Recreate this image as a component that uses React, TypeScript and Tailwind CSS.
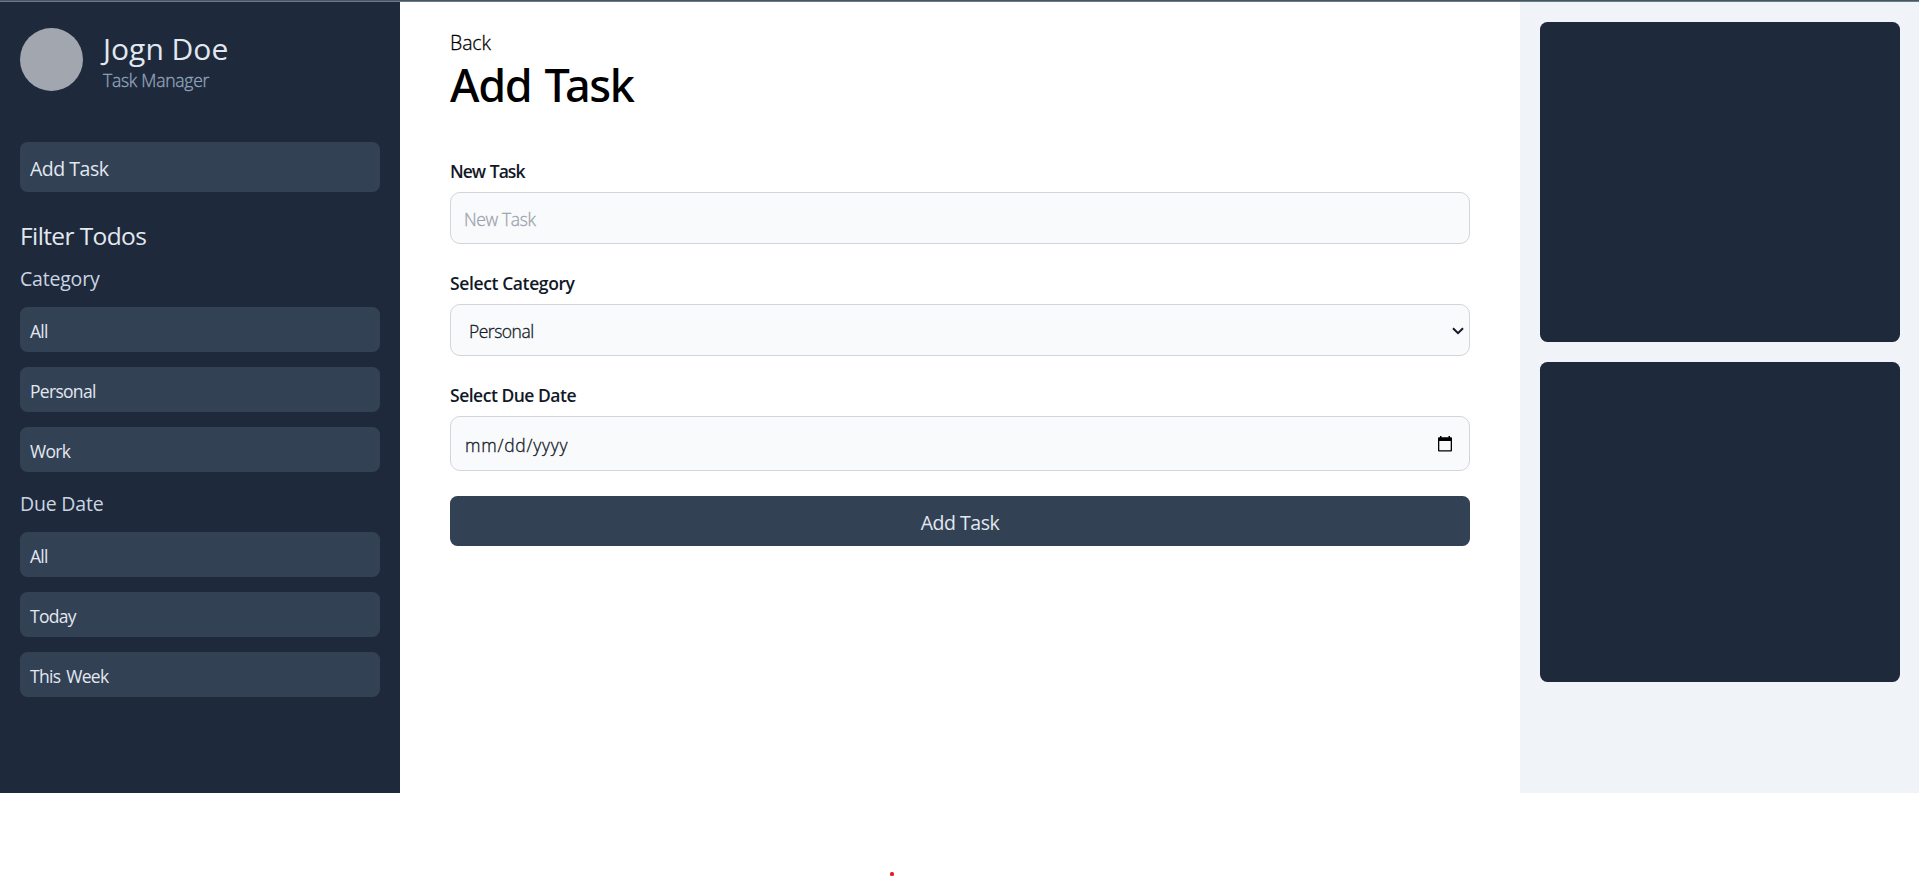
const categories = ["All", "Personal", "Work"];
const dueDates = ["All", "Today", "This Week"];

function FilterGroup({ title, items, className }: { title: string; items: string[]; className: string }) {
  return (
    <section className={className}>
      <h3 className="text-[19.5px] leading-[35px] tracking-[-0.2px] text-slate-300">{title}</h3>
      <ul className="mt-[11px] flex flex-col gap-[15px]">
        {items.map((item) => (
          <li
            key={item}
            className="flex h-[45px] items-center rounded-[7.5px] bg-[#334155] px-[10px] pt-[3px] text-[17.5px] tracking-[-0.04em] [word-spacing:2px] text-slate-200"
          >
            {item}
          </li>
        ))}
      </ul>
    </section>
  );
}

function Sidebar() {
  return (
    <aside className="flex w-[400px] shrink-0 flex-col bg-[#1e293b] px-5 pt-[26px]">
      <div className="flex h-[63px] items-center gap-5">
        <div className="size-[63px] rounded-full bg-[#a2a6af]" />
        <div className="pt-[3px]">
          <h1 className="text-[30px] leading-[38px] text-slate-200">Jogn Doe</h1>
          <p className="text-[17.5px] leading-[25px] font-light tracking-[-0.25px] text-slate-400 [-webkit-text-stroke:0.35px]">
            Task Manager
          </p>
        </div>
      </div>
      <button className="mt-[51px] flex h-[50px] items-center rounded-[7.5px] bg-[#334155] px-[10px] pt-[3px] text-[19.5px] tracking-[-0.025em] text-slate-200">
        Add Task
      </button>
      <h2 className="mt-[25px] text-[24.5px] leading-[38px] tracking-[-0.6px] text-slate-200">Filter Todos</h2>
      <FilterGroup title="Category" items={categories} className="mt-[6px]" />
      <FilterGroup title="Due Date" items={dueDates} className="mt-[14px]" />
    </aside>
  );
}

function TaskForm() {
  return (
    <main className="flex flex-1 flex-col px-[50px] pt-[26px] text-[#111827]">
      <a className="text-[19.5px] leading-[30px] font-light tracking-[-0.1px] text-black [-webkit-text-stroke:0.3px]">
        Back
      </a>
      <h2 className="mt-[2px] font-['Noto_Sans','Open_Sans',sans-serif] text-[45px] leading-[50px] font-medium tracking-[-0.03em] [word-spacing:3px] text-black">
        Add Task
      </h2>
      <label className="mt-[49px] text-[17.5px] leading-[25px] font-semibold tracking-[-0.055em] [word-spacing:1px]">
        New Task
      </label>
      <div className="mt-[8px] flex h-[52px] items-center rounded-[10px] border border-[#d1d5db] bg-[#f9fafb] px-[13px] pt-[3px] text-[17.5px] font-light tracking-[-0.35px] text-[#9ca3af] [-webkit-text-stroke:0.3px]">
        New Task
      </div>
      <label className="mt-[27px] text-[17.5px] leading-[25px] font-semibold tracking-[-0.022em]">
        Select Category
      </label>
      <div className="mt-[8px] flex h-[52px] items-center justify-between rounded-[10px] border border-[#d1d5db] bg-[#f9fafb] pr-[5px] pl-[18px] text-[17.5px] font-light">
        <span className="pt-[3px] tracking-[-0.5px] [-webkit-text-stroke:0.3px]">Personal</span>
        <svg className="mt-px h-[8px] w-[12px]" viewBox="0 0 12 8" fill="none" stroke="#111827" strokeWidth="2">
          <path d="M1 1.2L6 6.2L11 1.2" />
        </svg>
      </div>
      <label className="mt-[27px] text-[17.5px] leading-[25px] font-semibold tracking-[-0.028em]">
        Select Due Date
      </label>
      <div className="mt-[8px] flex h-[55px] items-center justify-between rounded-[10px] border border-[#d1d5db] bg-[#f9fafb] pr-[17px] pl-[14px] text-[17.5px] font-light">
        <span className="pt-[3px] tracking-[0.75px] [-webkit-text-stroke:0.3px]">mm/dd/yyyy</span>
        <svg className="h-[16px] w-[14px]" viewBox="0 0 14 16" fill="none">
          <path d="M2 0h1.5v1.2h7V0H12v1.2h1a1 1 0 0 1 1 1V14.500a1 1 0 0 1-1 1H1a1 1 0 0 1-1-1V2.200a1 1 0 0 1 1-1h1zM1.300 5v9.200h11.400V5z" fill="#000" fillRule="evenodd" />
        </svg>
      </div>
      <button className="mt-[25px] h-[50px] rounded-[7.5px] bg-[#334155] pt-[3px] text-[19.5px] tracking-[-0.025em] text-slate-200">
        Add Task
      </button>
    </main>
  );
}

export default function App() {
  return (
    <div className="flex h-[877px] flex-col overflow-hidden bg-white font-['Open_Sans','Noto_Sans',sans-serif]">
      <div className="h-[2px] shrink-0 border-b border-[#6b7a85] bg-[#455764]" />
      <div className="flex h-[791px] shrink-0">
        <Sidebar />
        <TaskForm />
        <aside className="flex w-[399px] shrink-0 flex-col gap-5 bg-[#f0f3f8] pt-5 pr-[19px] pl-5">
          <div className="h-[320px] rounded-[7.5px] bg-[#1e293b]" />
          <div className="h-[320px] rounded-[7.5px] bg-[#1e293b]" />
        </aside>
      </div>
      <div className="mt-[79px] ml-[890px] size-[4px] shrink-0 rounded-[1.5px] bg-[#ed1c24]" />
    </div>
  );
}
